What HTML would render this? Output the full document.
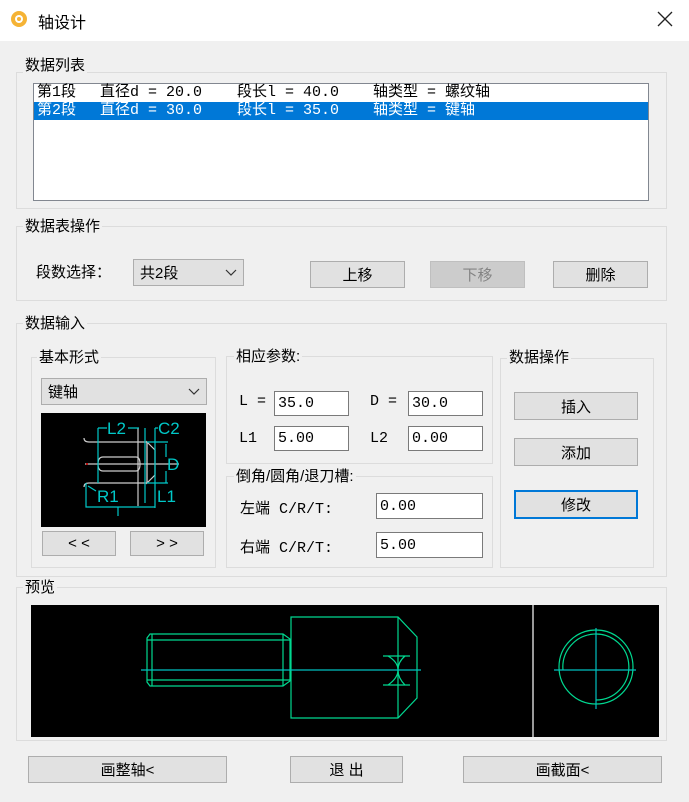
<!DOCTYPE html>
<html><head><meta charset="utf-8"><style>
*{box-sizing:border-box;margin:0;padding:0}
body{width:689px;height:802px;background:#f0f0f0;font-family:"Liberation Sans","Noto Sans CJK SC",sans-serif;font-size:15px;color:#000;position:relative;overflow:hidden}
.a{position:absolute}
.title{left:0;top:0;width:689px;height:41px;background:#fff}
.grp{position:absolute;border:1px solid #dcdcdc}
.lbl{position:absolute;background:#f0f0f0;padding:0 2px;font-size:15px;line-height:18px}
.btn{position:absolute;background:#e1e1e1;border:1px solid #adadad;text-align:center;font-size:15px;display:flex;align-items:center;justify-content:center}
.inp{position:absolute;background:#fff;border:1px solid #7a7a7a;font-family:"Liberation Mono","Noto Sans CJK SC",monospace;font-size:15px;padding-left:3px;display:flex;align-items:center}
.mono{font-family:"Liberation Mono","Noto Sans CJK SC",monospace;font-size:15px}
.combo{position:absolute;background:#e1e1e1;border:1px solid #adadad;display:flex;align-items:center;padding-left:6px}
</style></head><body>
<div class="a title"></div>
<svg class="a" style="left:10px;top:10px" width="18" height="18"><circle cx="9" cy="9" r="8" fill="#f5b335"/><circle cx="9" cy="9" r="4" fill="#fff"/><circle cx="9" cy="9" r="2" fill="#f5b335"/></svg>
<div class="a" style="left:38px;top:9px;font-size:16px">轴设计</div>
<svg class="a" style="left:657px;top:11px" width="16" height="16"><path d="M1 1L15 15M15 1L1 15" stroke="#222" stroke-width="1.3"/></svg>

<div class="grp" style="left:16px;top:72px;width:651px;height:137px"></div>
<div class="lbl" style="left:23px;top:57px">数据列表</div>
<div class="a" style="left:33px;top:83px;width:616px;height:118px;background:#fff;border:1px solid #828790"></div>
<div class="a mono" style="left:34px;top:102px;width:614px;height:18px;background:#0078d7"></div>
<div class="a mono" style="left:37px;top:84px;line-height:18px">第1段</div>
<div class="a mono" style="left:100px;top:84px;line-height:18px">直径d = 20.0</div>
<div class="a mono" style="left:237px;top:84px;line-height:18px">段长l = 40.0</div>
<div class="a mono" style="left:373px;top:84px;line-height:18px">轴类型 = 螺纹轴</div>
<div class="a mono" style="left:37px;top:102px;line-height:18px;color:#fff">第2段</div>
<div class="a mono" style="left:100px;top:102px;line-height:18px;color:#fff">直径d = 30.0</div>
<div class="a mono" style="left:237px;top:102px;line-height:18px;color:#fff">段长l = 35.0</div>
<div class="a mono" style="left:373px;top:102px;line-height:18px;color:#fff">轴类型 = 键轴</div>

<div class="grp" style="left:16px;top:226px;width:651px;height:75px"></div>
<div class="lbl" style="left:23px;top:218px">数据表操作</div>
<div class="a" style="left:36px;top:261px">段数选择：</div>
<div class="combo" style="left:133px;top:259px;width:111px;height:27px">共2段<svg class="a" style="right:6px;top:9px" width="12" height="8"><path d="M1 1L6 6L11 1" stroke="#333" fill="none" stroke-width="1.2"/></svg></div>
<div class="btn" style="left:310px;top:261px;width:95px;height:27px">上移</div>
<div class="btn" style="left:430px;top:261px;width:95px;height:27px;background:#ccc;border-color:#bfbfbf;color:#838383">下移</div>
<div class="btn" style="left:553px;top:261px;width:95px;height:27px">删除</div>

<div class="grp" style="left:16px;top:323px;width:651px;height:254px"></div>
<div class="lbl" style="left:23px;top:315px">数据输入</div>

<div class="grp" style="left:31px;top:357px;width:185px;height:211px"></div>
<div class="lbl" style="left:37px;top:349px">基本形式</div>
<div class="combo" style="left:41px;top:378px;width:166px;height:27px">键轴<svg class="a" style="right:6px;top:9px" width="12" height="8"><path d="M1 1L6 6L11 1" stroke="#333" fill="none" stroke-width="1.2"/></svg></div>
<svg class="a" style="left:41px;top:413px" width="165" height="114" viewBox="0 0 165 114">
<rect width="165" height="114" fill="#000"/>
<g stroke="#ccc" fill="none" stroke-width="1.2">
<line x1="44" y1="51" x2="138" y2="51"/>
<path d="M43 25Q43 29 48 29H106M43 74Q43 70 48 70H106"/>
<path d="M106 29L114 37V62L106 70Z"/><line x1="106" y1="29" x2="106" y2="70"/>
<path d="M62 44H95Q99 44 99 51Q99 58 95 58H62Q57 58 57 51Q57 44 62 44"/>
<line x1="97" y1="15" x2="97" y2="93"/>
</g>
<g stroke="#00c8c8" fill="none" stroke-width="1.2">
<path d="M57 15V70M57 15H66M87 15H98"/>
<path d="M104 15V90M114 15V95M114 15H117"/>
<path d="M106 29H127M106 70H127M125 31V44M125 58V70"/>
<path d="M45 70V94H114M77 94V103"/>
<path d="M47 73L55 78"/>
</g>
<g fill="#00c8c8" font-family="Liberation Sans" font-size="17">
<text x="66" y="21">L2</text><text x="117" y="21">C2</text><text x="126" y="57">D</text>
<text x="56" y="89">R1</text><text x="116" y="89">L1</text>
</g>
<circle cx="46" cy="51" r="1" fill="#d00"/>
</svg>
<div class="btn" style="left:42px;top:531px;width:74px;height:25px">&lt; &lt;</div>
<div class="btn" style="left:130px;top:531px;width:74px;height:25px">&gt; &gt;</div>

<div class="grp" style="left:226px;top:356px;width:267px;height:108px"></div>
<div class="lbl" style="left:234px;top:348px">相应参数:</div>
<div class="a mono" style="left:239px;top:393px">L =</div>
<div class="inp" style="left:274px;top:391px;width:75px;height:25px">35.0</div>
<div class="a mono" style="left:370px;top:393px">D =</div>
<div class="inp" style="left:408px;top:391px;width:75px;height:25px">30.0</div>
<div class="a mono" style="left:239px;top:430px">L1</div>
<div class="inp" style="left:274px;top:426px;width:75px;height:25px">5.00</div>
<div class="a mono" style="left:370px;top:430px">L2</div>
<div class="inp" style="left:408px;top:426px;width:75px;height:25px">0.00</div>

<div class="grp" style="left:226px;top:476px;width:267px;height:92px"></div>
<div class="lbl" style="left:234px;top:468px">倒角/圆角/退刀槽:</div>
<div class="a mono" style="left:240px;top:497px">左端 C/R/T:</div>
<div class="inp" style="left:376px;top:493px;width:107px;height:26px">0.00</div>
<div class="a mono" style="left:240px;top:536px">右端 C/R/T:</div>
<div class="inp" style="left:376px;top:532px;width:107px;height:26px">5.00</div>

<div class="grp" style="left:500px;top:358px;width:154px;height:210px"></div>
<div class="lbl" style="left:507px;top:349px">数据操作</div>
<div class="btn" style="left:514px;top:392px;width:124px;height:28px">插入</div>
<div class="btn" style="left:514px;top:438px;width:124px;height:28px">添加</div>
<div class="btn" style="left:514px;top:490px;width:124px;height:29px;border:2px solid #0078d7">修改</div>

<div class="grp" style="left:16px;top:587px;width:651px;height:154px"></div>
<div class="lbl" style="left:23px;top:579px">预览</div>
<svg class="a" style="left:31px;top:605px" width="628" height="132" viewBox="31 605 628 132">
<rect x="31" y="605" width="628" height="132" fill="#000"/>
<line x1="533" y1="605" x2="533" y2="737" stroke="#ccc" stroke-width="1.5"/>
<g stroke="#00d890" fill="none" stroke-width="1.2">
<path d="M150 634H283L290 639V681L283 686H150L147 682V638Z"/>
<path d="M147 640H290M147 680H290M152 634V686M283 634V686"/>
<path d="M291 617H398L417 637V698L398 718H291Z"/><line x1="398" y1="617" x2="398" y2="718"/>
<path d="M383 656H410M383 685H410M388 656Q398 662 398 670Q398 678 388 685M405 656Q398 662 398 670Q398 678 405 685"/>
<circle cx="596" cy="667" r="37"/>
<path d="M563 670A33 33 0 1 1 596 700"/>
</g>
<g stroke="#00c0c0" stroke-width="1.2"><line x1="141" y1="670" x2="421" y2="670"/><line x1="554" y1="670" x2="636" y2="670"/><line x1="596" y1="628" x2="596" y2="709"/></g>
</svg>

<div class="btn" style="left:28px;top:756px;width:199px;height:27px">画整轴&lt;</div>
<div class="btn" style="left:290px;top:756px;width:113px;height:27px">退 出</div>
<div class="btn" style="left:463px;top:756px;width:199px;height:27px">画截面&lt;</div>
</body></html>
